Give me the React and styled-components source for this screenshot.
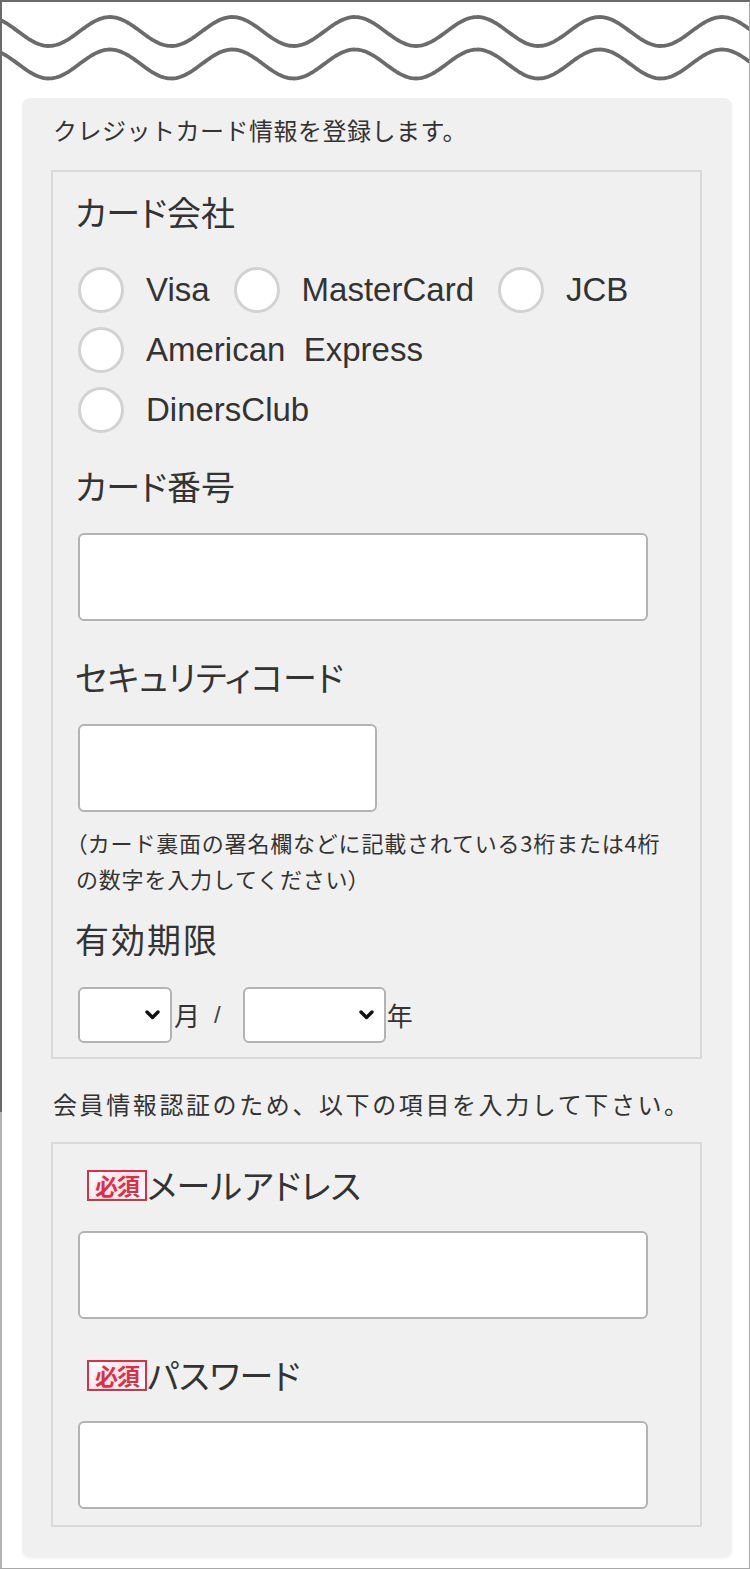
import React from 'react';
import styled, { createGlobalStyle } from 'styled-components';

const JP = `"Noto Sans CJK JP", "Noto Sans", sans-serif`;
const LATIN = `"Liberation Sans", Arial, "Noto Sans CJK JP", sans-serif`;

const GlobalStyle = createGlobalStyle`
  html, body { margin: 0; padding: 0; background: #fff; }
  body { font-family: ${JP}; color: #333; }
  * { box-sizing: border-box; }
`;

const Frame = styled.div`
  width: 750px;
  height: 1569px;
  border-top: 2px solid #6b6b6b;
  border-right: 1px solid #a8a8a8;
  border-bottom: 1px solid #a8a8a8;
  padding-left: 2px;
  background:
    linear-gradient(to bottom, #6b6b6b 0, #6b6b6b 1110px, #b4b4b4 1110px) left top / 2px 100% no-repeat,
    #fff;
`;

const WaveSvg = styled.svg`
  display: block;
  width: 747px;
  height: 96px;
`;

const Panel = styled.div`
  margin-left: 20px;
  width: 710px;
  background: #f0f0f0;
  border-radius: 8px;
  padding: 14px 30px 30px 29px;
  box-shadow: 0 2px 3px rgba(0, 0, 0, 0.05);
`;

const Lead = styled.p`
  margin: ${(p) => p.$mt || 0}px 0 0;
  padding-left: 2px;
  font-family: ${JP};
  font-size: 24px;
  line-height: 36px;
  letter-spacing: ${(p) => p.$ls || 0}px;
  color: #333;
  white-space: nowrap;
`;

const Box = styled.div`
  margin-top: ${(p) => p.$mt}px;
  border: 2px solid #d9d9d9;
  padding: ${(p) => p.$pt}px 25px ${(p) => p.$pb}px;
`;

const Heading = styled.div`
  margin-top: ${(p) => p.$mt || 0}px;
  margin-left: -3px;
  font-family: ${JP};
  font-size: 34px;
  line-height: 44px;
  letter-spacing: ${(p) => p.$ls || 0}px;
  font-feature-settings: "palt";
  color: #333;
  white-space: nowrap;
`;

const RadioGroup = styled.div`
  margin-top: 26px;
  width: 580px;
  display: flex;
  flex-wrap: wrap;
  column-gap: 24px;
`;

const RadioItem = styled.label`
  display: flex;
  align-items: center;
  height: 60px;
  gap: 22px;
  cursor: pointer;
`;

const Radio = styled.input`
  appearance: none;
  -webkit-appearance: none;
  margin: 0;
  width: 46px;
  height: 46px;
  border-radius: 50%;
  border: 3px solid #d2d2d2;
  background: #fff;
  flex: none;
`;

const RadioText = styled.span`
  font-family: ${LATIN};
  font-size: 33px;
  color: #333;
  white-space: pre;
`;

const TextInput = styled.input`
  display: block;
  margin-top: 25px;
  width: ${(p) => p.$w}px;
  height: 88px;
  border: 2px solid #b3b3b3;
  border-radius: 6px;
  background: #fff;
  padding: 0 12px;
  font-size: 24px;
  outline: none;
`;

const Note = styled.p`
  margin: 12px 0 0 -2px;
  font-family: ${JP};
  font-size: 22px;
  line-height: 36px;
  letter-spacing: 0.8px;
  color: #333;
  white-space: nowrap;
`;

const Paren = styled.span`
  font-feature-settings: "palt";
`;

const ExpiryRow = styled.div`
  margin-top: 26px;
  display: flex;
  align-items: center;
`;

const SelectWrap = styled.div`
  position: relative;
  width: ${(p) => p.$w}px;
  height: 56px;
  flex: none;
`;

const Select = styled.select`
  appearance: none;
  -webkit-appearance: none;
  width: 100%;
  height: 100%;
  border: 2px solid #b3b3b3;
  border-radius: 6px;
  background: #fff;
  margin: 0;
  font-size: 22px;
`;

const Chevron = styled.svg`
  position: absolute;
  right: 12px;
  top: 50%;
  width: 15px;
  height: 10px;
  transform: translateY(-50%);
  pointer-events: none;
`;

const Unit = styled.span`
  font-family: ${JP};
  font-size: 26px;
  line-height: 36px;
  color: #333;
  margin-left: ${(p) => p.$ml || 0}px;
`;

const Slash = styled.span`
  font-family: ${LATIN};
  font-size: 24px;
  color: #444;
  margin: 0 22px 0 14px;
`;

const LabelRow = styled.div`
  margin-top: ${(p) => p.$mt || 0}px;
  display: flex;
  align-items: center;
  height: 44px;
  padding-left: 9px;
`;

const Badge = styled.span`
  flex: none;
  width: 60px;
  height: 31px;
  border: 2px solid #d3324a;
  background: linear-gradient(135deg, #fff 0%, #fbe1e6 50%, #fff 100%);
  color: #d3324a;
  font-family: ${JP};
  font-weight: 700;
  font-size: 23px;
  line-height: 27px;
  display: flex;
  align-items: center;
  justify-content: center;
  letter-spacing: -1px;
`;

const LabelText = styled.span`
  font-family: ${JP};
  font-size: 34px;
  line-height: 44px;
  font-feature-settings: "palt";
  color: #333;
  white-space: nowrap;
`;

function wavePath(c, a, crest = 110, period = 122.4) {
  let d = '';
  for (let x = 0; x <= 752; x += 2) {
    const y = c - a * Math.cos((2 * Math.PI * (x - crest)) / period);
    d += `${x === 0 ? 'M' : 'L'}${x} ${y.toFixed(2)} `;
  }
  return d;
}

const Waves = () => (
  <WaveSvg viewBox="2 2 747 96" aria-hidden="true">
    <path d={wavePath(31.5, 14.5)} fill="none" stroke="#6b6b6b" strokeWidth="3.8" />
    <path d={wavePath(64, 14.5)} fill="none" stroke="#6b6b6b" strokeWidth="3.8" />
  </WaveSvg>
);

const ChevronIcon = () => (
  <Chevron viewBox="0 0 15 10" aria-hidden="true">
    <path d="M2 2 L7.5 7.5 L13 2" fill="none" stroke="#111" strokeWidth="3.4" strokeLinecap="round" strokeLinejoin="round" />
  </Chevron>
);

const brands = ['Visa', 'MasterCard', 'JCB', 'American  Express', 'DinersClub'];

export default function App() {
  return (
    <>
      <GlobalStyle />
      <Frame>
        <Waves />
        <Panel>
          <Lead $ls={0.5}>クレジットカード情報を登録します。</Lead>
          <Box $mt={22} $pt={18} $pb={14}>
            <Heading>カード会社</Heading>
            <RadioGroup>
              {brands.map((b) => (
                <RadioItem key={b}>
                  <Radio type="radio" name="brand" />
                  <RadioText>{b}</RadioText>
                </RadioItem>
              ))}
            </RadioGroup>
            <Heading $mt={24}>カード番号</Heading>
            <TextInput type="text" $w={570} />
            <Heading $mt={34}>セキュリティコード</Heading>
            <TextInput type="text" $w={299} />
            <Note>
              <Paren>（</Paren>カード裏面の署名欄などに記載されている3桁または4桁
              <br />
              の数字を入力してください<Paren>）</Paren>
            </Note>
            <Heading $mt={21} $ls={2}>有効期限</Heading>
            <ExpiryRow>
              <SelectWrap $w={94}>
                <Select defaultValue="">
                  <option value=""></option>
                </Select>
                <ChevronIcon />
              </SelectWrap>
              <Unit $ml={2}>月</Unit>
              <Slash>/</Slash>
              <SelectWrap $w={143}>
                <Select defaultValue="">
                  <option value=""></option>
                </Select>
                <ChevronIcon />
              </SelectWrap>
              <Unit $ml={1}>年</Unit>
            </ExpiryRow>
          </Box>
          <Lead $mt={27} $ls={2.6}>会員情報認証のため、以下の項目を入力して下さい。</Lead>
          <Box $mt={20} $pt={19} $pb={16}>
            <LabelRow>
              <Badge>必須</Badge>
              <LabelText>メールアドレス</LabelText>
            </LabelRow>
            <TextInput type="email" $w={570} style={{ marginTop: 24 }} />
            <LabelRow $mt={34}>
              <Badge>必須</Badge>
              <LabelText>パスワード</LabelText>
            </LabelRow>
            <TextInput type="password" $w={570} style={{ marginTop: 24 }} />
          </Box>
        </Panel>
      </Frame>
    </>
  );
}
